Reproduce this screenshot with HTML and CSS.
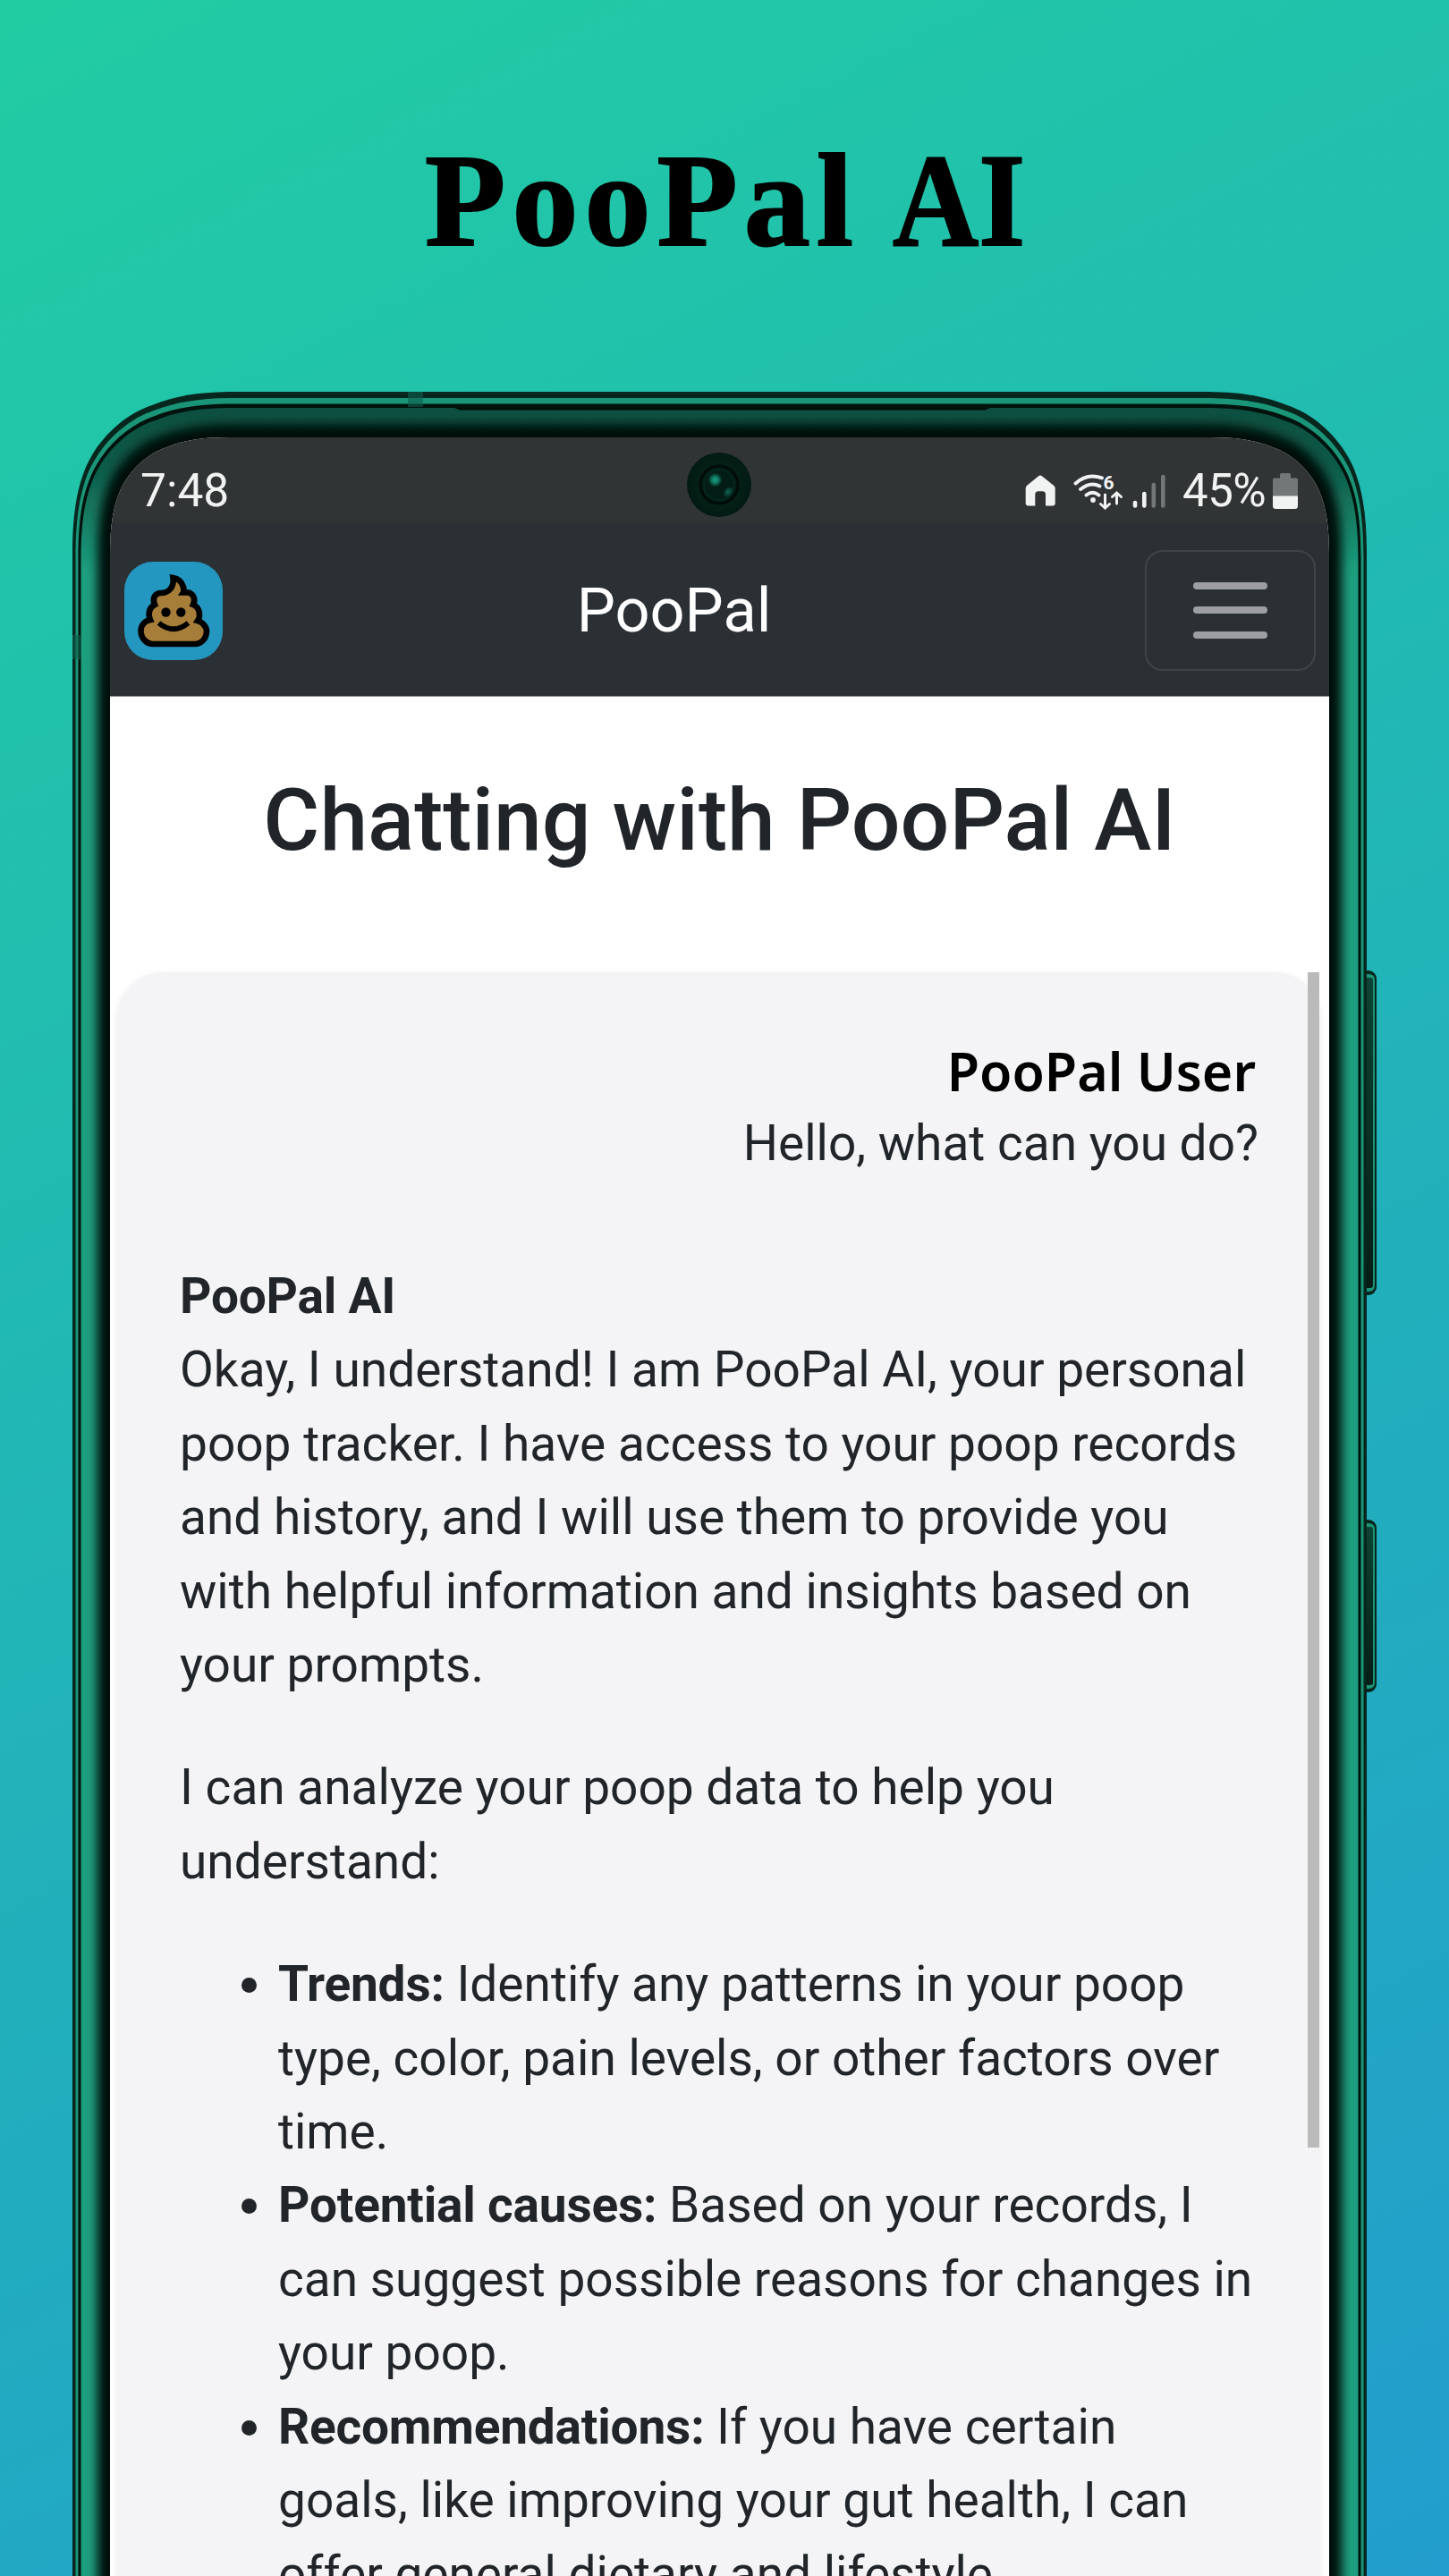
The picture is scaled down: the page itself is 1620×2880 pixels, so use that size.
FILE: index.html
```html
<!DOCTYPE html>
<html lang="en">
<head>
<meta charset="utf-8">
<title>PooPal AI</title>
<link rel="stylesheet" href="styles.css">
</head>
<body>
<main class="poster">
  <h1 class="poster-title"><span class="title-name">PooPal</span> <span class="title-ai">AI</span></h1>

  <svg class="phone-frame" viewBox="0 0 1620 2880" width="1620" height="2880" aria-hidden="true">
    <defs>
      <linearGradient id="glow" gradientUnits="userSpaceOnUse" x1="0" y1="456" x2="0" y2="640">
        <stop offset="0" stop-color="#0c4f3f"/><stop offset=".35" stop-color="#0f5a48"/><stop offset="1" stop-color="#1b9f7e"/>
      </linearGradient>
      <linearGradient id="button" x1="0" y1="0" x2="0" y2="1">
        <stop offset="0" stop-color="#0d4435"/><stop offset="1" stop-color="#041d16"/>
      </linearGradient>
      <path id="inner" d="M90.500 2920V626C90.500 583 95 556 105.500 532C119.500 502 145.500 479 173.500 470C198.500 460 224.500 456 261.500 456H1347.500C1384.500 456 1410.500 460 1435.500 470C1463.500 479 1489.500 502 1503.500 532C1514 556 1518.500 583 1518.500 626V2920Z"/>
      <clipPath id="innerClip"><use href="#inner"/></clipPath>
      <filter id="soft" x="-5%" y="-5%" width="110%" height="110%"><feGaussianBlur stdDeviation="6"/></filter>
    </defs>
    <g>
      <path class="edge" d="M1526 1085H1530A9 9 0 0 1 1539 1094V1439A9 9 0 0 1 1530 1448H1526Z"/>
      <path class="edge-light" d="M1528 1089H1530Q1537 1089 1537 1096V1437Q1537 1444 1530 1444H1528Z"/>
      <path fill="url(#button)" d="M1528 1093H1532Q1535 1093 1535 1096V1437Q1535 1440 1532 1440H1528Z"/>
      <path class="edge" d="M1526 1699H1530A9 9 0 0 1 1539 1708V1883A9 9 0 0 1 1530 1892H1526Z"/>
      <path class="edge-light" d="M1528 1703H1530Q1537 1703 1537 1710V1881Q1537 1888 1530 1888H1528Z"/>
      <path fill="url(#button)" d="M1528 1707H1532Q1535 1707 1535 1710V1881Q1535 1884 1532 1884H1528Z"/>
    </g>
    <path class="edge" d="M81 2920V620C81 575 86 545 97 520C112 488 140 463 170 453C197 442 225 438 265 438H1344C1384 438 1412 442 1439 453C1469 463 1497 488 1512 520C1523 545 1528 575 1528 620V2920Z"/>
    <path class="edge-light" d="M84.500 2920V623C84.500 579 89.500 549 100 525C115 494 142 469 172 459C198 449 226 445 264 445H1345C1383 445 1411 449 1437 459C1467 469 1494 494 1509 525C1519.500 549 1524.500 579 1524.500 623V2920Z"/>
    <path class="edge-dark" d="M87.500 2920V625C87.500 581 92 553 103 529C117 499 144 475 173 465C198 455 226 451.500 263 451.500H1346C1383 451.500 1411 455 1436 465C1465 475 1492 499 1506 529C1517 553 1521.500 581 1521.500 625V2920Z"/>
    <use href="#inner" fill="#010e0a"/>
    <g clip-path="url(#innerClip)">
      <use href="#inner" fill="none" stroke="url(#glow)" stroke-width="37" filter="url(#soft)"/>
    </g>
    <path d="M508 456H1107L1101 458.500H514Z" fill="#020f0b"/>
    <path d="M456 438H473V455H456ZM81 710H90V737H81Z" fill="#0f5f4c" opacity=".6"/>
  </svg>

  <section class="screen">
    <div class="status-bar">
      <span class="clock">7:48</span>
      <div class="status-icons">
        <svg class="status-glyphs" viewBox="0 0 160 46" width="160" height="46">
          <path d="M.7 19Q.7 17 2.200 15.700L14.800 5.400Q17 3.600 19.200 5.400L32 15.700Q33.700 17 33.700 19V35.500Q33.700 38.500 30.700 38.500H23V26Q23 22.300 19.500 22.300H15Q11.300 22.300 11.300 26V38.500H3.700Q.7 38.500.7 35.500Z" fill="#f1f3f3"/>
          <g fill="none" stroke="#f1f3f3" stroke-width="3.900" stroke-linecap="round">
            <path d="M56.500 13.500Q69 1.500 86 7.300M62 20Q73 11 83.500 16.500M68.500 26.500Q75.500 21 82.500 26.500"/>
            <path d="M89.500 26V40M84.500 36.500L89.500 41L94.500 36.500M102.500 36V25M97.500 28.500L102.500 24L107.500 28.500" stroke-width="3"/>
          </g>
          <circle cx="76" cy="32" r="2.900" fill="#f1f3f3"/>
          <text x="87.500" y="20" class="wifi-gen">6</text>
          <g stroke-width="4.600" stroke-linecap="round">
            <path d="M123 35V38.500M133.300 25V38.500" stroke="#f1f3f3"/>
            <path d="M143.800 15V38.500M154.300 6V38.500" stroke="#747777"/>
          </g>
        </svg>
        <span class="battery-level">45%</span>
        <svg class="battery" viewBox="0 0 28 40" width="28" height="40">
          <path d="M2 5.500H8V2Q8 0 10 0H18Q20 0 20 2V5.500H26Q28 5.500 28 7.500V26H0V7.500Q0 5.500 2 5.500Z" fill="#747777"/>
          <path d="M0 25.500H28V36.500Q28 40 24.500 40H3.500Q0 40 0 36.500Z" fill="#f1f3f3"/>
        </svg>
      </div>
      <svg class="camera" viewBox="0 0 72 72" width="72" height="72" aria-hidden="true">
        <defs>
          <radialGradient id="lens"><stop offset="0" stop-color="#18a184"/><stop offset=".4" stop-color="#118069"/><stop offset="1" stop-color="#118069" stop-opacity="0"/></radialGradient>
          <radialGradient id="ring"><stop offset=".5" stop-color="#052219"/><stop offset="1" stop-color="#021a13"/></radialGradient>
        </defs>
        <circle cx="36" cy="36" r="36" fill="url(#ring)"/>
        <circle cx="36" cy="36" r="21" fill="#031c15" stroke="#010c09" stroke-width="3"/>
        <circle cx="36" cy="36" r="17" fill="none" stroke="#052a20" stroke-width="1.500"/>
        <circle cx="31.500" cy="30.500" r="8" fill="url(#lens)"/>
        <ellipse cx="46" cy="44" rx="7" ry="5" transform="rotate(-48 46 44)" fill="url(#lens)" opacity=".5"/>
      </svg>
    </div>

    <header class="navbar">
      <svg class="logo" viewBox="0 0 110 110" width="110" height="110">
        <rect width="110" height="110" rx="32" fill="#2497c0"/>
        <path d="M54.500 18C67 20 67 33 66 34.500H71C77 35 80 42 77 48C84 51 86 60 82 66C90 68 92 76 92 77C92 87 85 92 79 92H32C25 92 18.500 86 18.500 77C18.500 71 23 66 29 65C26 58 28 51 34 48C31 41 34 35 41 35C49 35 56 29 54.500 18Z" fill="#a67e39" stroke="#000" stroke-width="6.600"/>
        <circle cx="46.500" cy="56.500" r="5.200"/><circle cx="63.300" cy="56.500" r="5.200"/>
        <path d="M38.500 68.500Q55 82 71.500 68.500" fill="none" stroke="#000" stroke-width="5.800"/>
      </svg>
      <span class="brand">PooPal</span>
      <div class="menu-button"><i class="bar"></i><i class="bar"></i><i class="bar"></i></div>
    </header>

    <div class="page">
      <h2 class="page-title">Chatting with PooPal AI</h2>
      <div class="chat">
        <div class="message message-user">
          <div class="user-name">PooPal User</div>
          <div class="user-text">Hello, what can you do?</div>
        </div>
        <div class="message message-ai">
          <strong>PooPal AI</strong>
          <p>Okay, I understand! I am PooPal AI, your personal<br>poop tracker. I have access to your poop records<br>and history, and I will use them to provide you<br>with helpful information and insights based on<br>your prompts.</p>
          <p>I can analyze your poop data to help you<br>understand:</p>
          <ul>
            <li><strong>Trends:</strong> Identify any patterns in your poop<br>type, color, pain levels, or other factors over<br>time.</li>
            <li><strong>Potential causes:</strong> Based on your records, I<br>can suggest possible reasons for changes in<br>your poop.</li>
            <li><strong>Recommendations:</strong> If you have certain<br>goals, like improving your gut health, I can<br>offer general dietary and lifestyle</li>
          </ul>
        </div>
        <div class="scrollbar"></div>
      </div>
    </div>
  </section>
</main>
</body>
</html>
```

FILE: styles.css
```css
* { box-sizing: border-box; }

body { margin: 0; }

.poster {
  position: relative;
  width: 1620px;
  height: 2880px;
  overflow: hidden;
  background: linear-gradient(153deg, #21cca2, #229dcd);
  font-family: Roboto, "Liberation Sans", sans-serif;
  color: #212529;
}

.poster-title {
  margin: 0;
  height: 489px;
  padding: 138px 0 0 475px;
  font: bold 148px/172px "Liberation Serif", serif;
  -webkit-text-stroke: 2px #000;
  color: #000;
  white-space: nowrap;
}

.title-name { letter-spacing: 7px; }

.title-ai {
  display: inline-block;
  transform: scaleX(.9);
  transform-origin: left;
}

.phone-frame { position: absolute; left: 0; top: 0; }
.edge { fill: #06261e; }
.edge-light { fill: #1a9577; }
.edge-dark { fill: #02130e; }

.screen {
  position: relative;
  width: 1363px;
  height: 2391px;
  margin-left: 123px;
  background: #fff;
  overflow: hidden;
  clip-path: path("M0 2400V131C0 99 3.600 77 11.500 59C22 36 42 18 64 10.800C83 3 104 0 132 0H1231C1259 0 1280 3 1299 10.800C1321 18 1341 36 1351.500 59C1359.400 77 1363 99 1363 131V2400Z");
}

.status-bar {
  position: relative;
  display: flex;
  justify-content: space-between;
  align-items: flex-start;
  height: 96px;
  padding: 30px 35px 0 34px;
  background: #313435;
  color: #f1f3f3;
  font-size: 51px;
  line-height: 60px;
}

.clock { font-size: 51.500px; }
.status-icons { display: flex; }
.status-glyphs { margin: 8px 16px 0 0; }
.battery-level { letter-spacing: -.6px; }
.battery { margin: 10px 0 0 8px; }
.wifi-gen { font: 700 21px Roboto, sans-serif; fill: #f1f3f3; }
.camera { position: absolute; left: 645px; top: 17px; }

.navbar {
  display: flex;
  align-items: center;
  justify-content: space-between;
  height: 194px;
  padding: 1px 15px 0 16px;
  background: #2b3035;
  border-bottom: 1px solid #8b8d90;
}

.logo { margin-top: 2px; }
.brand { font-size: 68.500px; color: #fff; margin-left: -22px; }

.menu-button {
  display: flex;
  flex-direction: column;
  align-items: center;
  justify-content: center;
  gap: 19.500px;
  width: 191px;
  height: 135px;
  border: 2px solid #3f4448;
  border-radius: 20px;
}

.bar { width: 83px; height: 8px; border-radius: 4px; background: #9c9ea1; }

.page { padding-top: 80px; }

.page-title {
  margin: 0;
  height: 228px;
  text-align: center;
  font-size: 96.600px;
  font-weight: 500;
  line-height: 116px;
  white-space: nowrap;
}

.chat {
  position: relative;
  width: 1343px;
  height: 1880px;
  margin-left: 9px;
  padding: 69px;
  border-radius: 50px;
  background: #f4f4f6;
  box-shadow: 0 3px 9px rgba(0, 0, 0, .1);
  font-size: 55px;
  line-height: 82.400px;
  white-space: nowrap;
}

.message-user { height: 252px; text-align: right; }
.user-name {
  margin-right: 2px;
  font: 600 59px/82px "Noto Sans", "Open Sans", sans-serif;
  color: #000;
}
.user-text { margin-right: -1px; line-height: 80px; }

.message-ai p, .message-ai ul { margin: 0 0 55px; }
.message-ai ul { padding-left: 110px; }
.message-ai strong { letter-spacing: -.2px; }

.scrollbar {
  position: absolute;
  right: 0;
  top: 0;
  width: 13px;
  height: 1314px;
  background: #bababa;
}
```
